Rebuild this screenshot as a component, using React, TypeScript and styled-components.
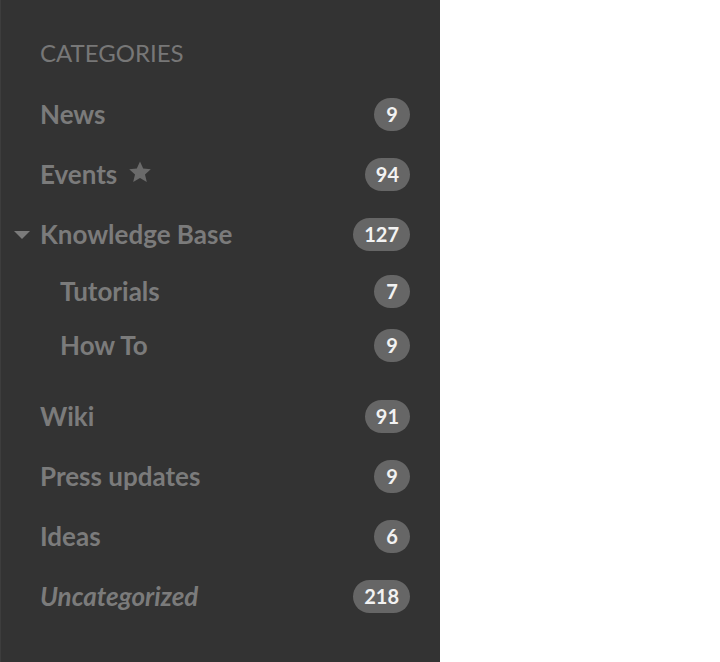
import React from "react";
import styled, { createGlobalStyle } from "styled-components";

const GlobalStyle = createGlobalStyle`
  html, body {
    margin: 0;
    padding: 0;
    background: #ffffff;
  }
  body {
    font-family: Lato, "Open Sans", sans-serif;
  }
`

const Sidebar = styled.nav`
  width: 440px;
  height: 662px;
  box-sizing: border-box;
  background-color: #333333;
  border-left: 1px solid #3d3d3d;
  padding: 38px 30px 0 39px;
`

const Heading = styled.div`
  font-size: 24px;
  line-height: 30px;
  color: #777777;
  text-transform: uppercase;
  margin-bottom: 16px;
`

const List = styled.ul`
  list-style: none;
  margin: 0;
  padding: 0;
`

const SubList = styled.ul`
  list-style: none;
  margin: 0 0 14px 0;
  padding: 0 0 0 20px;
`

const Row = styled.li<{ $compact?: boolean }>`
  position: relative;
  height: ${p => (p.$compact ? 54 : 60)}px;
  display: flex;
  align-items: center;
  justify-content: space-between;
`

const Label = styled.span<{ $italic?: boolean }>`
  display: flex;
  align-items: center;
  gap: 11px;
  font-size: 26px;
  font-weight: 700;
  font-style: ${p => (p.$italic ? "italic" : "normal")};
  color: #7b7b7b;
`

const Caret = styled.span`
  position: absolute;
  left: -26px;
  top: 50%;
  margin-top: -3px;
  width: 0;
  height: 0;
  border-left: 8px solid transparent;
  border-right: 8px solid transparent;
  border-top: 8px solid #7b7b7b;
`

const Badge = styled.span`
  min-width: 36px;
  height: 33px;
  box-sizing: border-box;
  padding: 0 11px;
  border-radius: 17px;
  background-color: #666666;
  color: #f2f2f2;
  font-size: 20px;
  font-weight: 700;
  display: flex;
  align-items: center;
  justify-content: center;
`

const Star = () => (
  <svg width="24" height="24" viewBox="0 0 24 24" style={{ marginTop: -4 }}>
    <path
      fill="#6a6a6a"
      d="M12 1.5l3.2 7.1 7.6.7-5.8 5.1 1.8 7.6L12 18l-6.8 4 1.8-7.6-5.8-5.1 7.6-.7z"
    />
  </svg>
)

type Item = { name: string; count: number }

const subItems: Item[] = [
  { name: "Tutorials", count: 7 },
  { name: "How To", count: 9 },
]

const bottomItems: Item[] = [
  { name: "Wiki", count: 91 },
  { name: "Press updates", count: 9 },
  { name: "Ideas", count: 6 },
]

export default function App() {
  return (
    <>
      <GlobalStyle />
      <Sidebar>
        <Heading>Categories</Heading>
        <List>
          <Row>
            <Label>News</Label>
            <Badge>9</Badge>
          </Row>
          <Row>
            <Label>
              Events <Star />
            </Label>
            <Badge>94</Badge>
          </Row>
          <Row>
            <Caret />
            <Label>Knowledge Base</Label>
            <Badge>127</Badge>
          </Row>
          <SubList>
            {subItems.map(item => (
              <Row $compact key={item.name}>
                <Label>{item.name}</Label>
                <Badge>{item.count}</Badge>
              </Row>
            ))}
          </SubList>
          {bottomItems.map(item => (
            <Row key={item.name}>
              <Label>{item.name}</Label>
              <Badge>{item.count}</Badge>
            </Row>
          ))}
          <Row>
            <Label $italic>Uncategorized</Label>
            <Badge>218</Badge>
          </Row>
        </List>
      </Sidebar>
    </>
  )
}
